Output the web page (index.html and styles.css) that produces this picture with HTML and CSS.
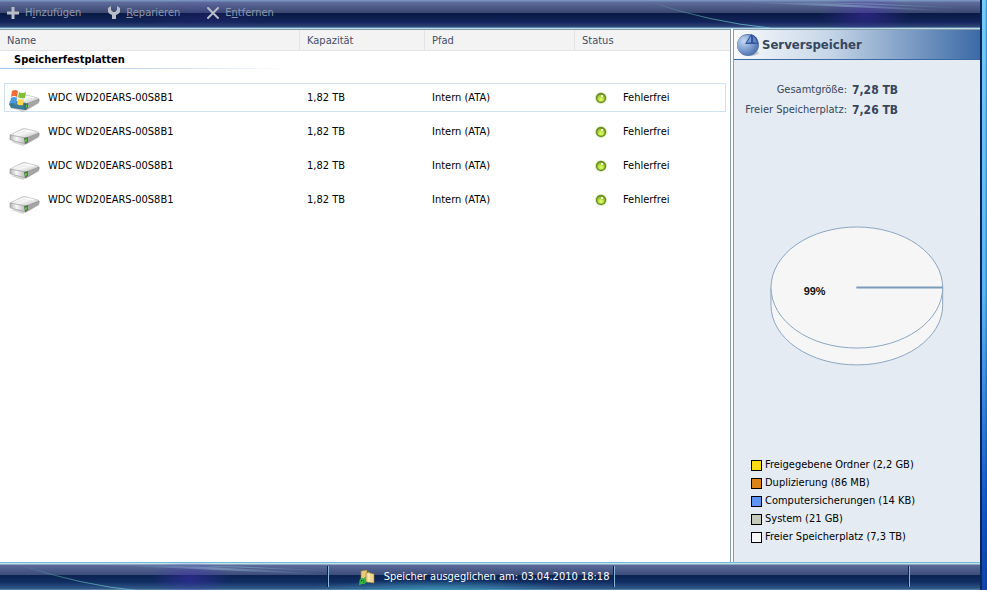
FILE: index.html
```html
<!DOCTYPE html>
<html lang="de">
<head>
<meta charset="utf-8">
<title>Serverspeicher</title>
<link rel="stylesheet" href="styles.css">
</head>
<body>
<svg class="defs" aria-hidden="true">
  <defs>
    <linearGradient id="metal" x1="0" y1="0" x2="1" y2="1"><stop offset="0" stop-color="#bbb"/><stop offset=".45" stop-color="#f6f6f6"/><stop offset="1" stop-color="#b0b0b0"/></linearGradient>
    <linearGradient id="front" x1="0" y1="0" x2="1" y2="0"><stop offset="0" stop-color="#b2b2b2"/><stop offset=".4" stop-color="#f8f8f8"/><stop offset="1" stop-color="#b5b5b5"/></linearGradient>
    <radialGradient id="led" cx=".5" cy=".7" r=".75"><stop offset="0" stop-color="#eaff70"/><stop offset=".55" stop-color="#b2d93a"/><stop offset="1" stop-color="#7ba32a"/></radialGradient>
    <radialGradient id="disc" cx=".35" cy=".3" r=".8"><stop offset="0" stop-color="#c5d8f2"/><stop offset=".6" stop-color="#7a9bd0"/><stop offset="1" stop-color="#4c6ca8"/></radialGradient>
    <linearGradient id="ray" x1="0" x2="1"><stop offset="0" stop-color="#9be" stop-opacity="0"/><stop offset=".5" stop-color="#acd9ea" stop-opacity=".4"/><stop offset="1" stop-color="#9be" stop-opacity="0"/></linearGradient>
    <linearGradient id="arc" x1="0" x2="1"><stop offset="0" stop-color="#6bd0b8" stop-opacity="0"/><stop offset=".5" stop-color="#57a8a4" stop-opacity=".75"/><stop offset="1" stop-color="#6bd" stop-opacity=".9"/></linearGradient>
    <symbol id="drive" viewBox="0 0 32 18">
      <path d="M2 14 14 18 31 9 25 8Z" fill="#777" opacity=".3"/>
      <path d="M1 7 13 1Q15 0 18 1L29 4Q31 5 30 7L17 11 3 9Z" fill="url(#metal)" stroke="#b5b5b5" stroke-width=".6"/>
      <path d="M1 7 17 10V16L2 12Q1 12 1 11Z" fill="url(#front)" stroke="#909090" stroke-width=".6"/>
      <path d="M17 10 30 5V8L17 16Z" fill="#a5a5a5" stroke="#888" stroke-width=".5"/>
      <path d="M15 10 19 9V14L16 16Z" fill="#527b48"/><path d="M16 12 18 11V13L16 14Z" fill="#62d137"/>
      <path d="M5 6 15 2 25 4" fill="none" stroke="#fff" stroke-width="1"/>
    </symbol>
    <symbol id="light" viewBox="0 0 12 12">
      <circle cx="6" cy="6" r="5.8" fill="#c7dc99"/><circle cx="6" cy="6" r="5" fill="#5b851a"/><circle cx="6" cy="6" r="3.8" fill="url(#led)"/><path d="M6 3h2v2H6z" fill="#fbffe8"/>
    </symbol>
    <symbol id="swoosh" viewBox="0 0 450 28" preserveAspectRatio="none">
      <path d="M20 2Q80 22 140 28" fill="none" stroke="url(#arc)"/>
      <path d="M100 2Q220 2 330 12 220 7 100 2" fill="url(#ray)"/>
      <path d="M150 2Q240 3 330 8" fill="none" stroke="url(#ray)"/>
    </symbol>
  </defs>
</svg>
<div class="window">
  <div class="content">
    <header class="bar toolbar">
      <svg class="glint glint-right" viewBox="0 0 350 28" aria-hidden="true"><use href="#swoosh" width="450" height="28"/></svg>
      <button class="tool" disabled><svg width="14" height="14" viewBox="0 0 14 14" aria-hidden="true"><path d="M7 1V13M1 7H13" stroke="#b8bdc9" stroke-width="3"/></svg><span>H<u>i</u>nzufügen</span></button>
      <button class="tool" disabled><svg width="14" height="14" viewBox="0 0 14 14" aria-hidden="true"><path d="M1 2 4 0V4L6 6H8L10 4V0L13 2V6Q12 8 9 9V13H5V9Q2 8 1 6Z" fill="#b8bdc9"/></svg><span><u>R</u>eparieren</span></button>
      <button class="tool" disabled><svg width="14" height="14" viewBox="0 0 14 14" aria-hidden="true"><path d="M2 2 12 12M12 2 2 12" stroke="#b8bdc9" stroke-width="2" stroke-linecap="round"/></svg><span>E<u>n</u>tfernen</span></button>
    </header>
    <div class="panes">
      <main class="disks">
        <table>
          <thead><tr><th scope="col">Name</th><th scope="col">Kapazität</th><th scope="col">Pfad</th><th scope="col">Status</th></tr></thead>
          <tbody>
            <tr class="group"><th colspan="4" scope="rowgroup">Speicherfestplatten</th></tr>
            <tr class="disk focused"><td><svg class="drive" viewBox="0 0 32 22" aria-hidden="true"><use href="#drive" y="4" width="32" height="18"/><path d="M0 14 3 10 17 13 17 20 2 18Z" fill="#246d8b" opacity=".85"/><path d="M3 1Q6-1 9 1L8 7Q5 5 2 7Z" fill="#ed6b35"/><path d="M10 2Q13 4 17 2L16 8Q12 9 9 7Z" fill="#83be38"/><path d="M2 8Q5 6 8 8L7 14Q4 12 1 14Z" fill="#459be3"/><path d="M9 9Q12 10 15 9L14 15Q10 16 8 14Z" fill="#ffd84a"/></svg>WDC WD20EARS-00S8B1</td><td>1,82 TB</td><td>Intern (ATA)</td><td><svg class="light" aria-hidden="true"><use href="#light"/></svg>Fehlerfrei</td></tr>
            <tr class="disk"><td><svg class="drive" viewBox="0 0 32 22" aria-hidden="true"><use href="#drive" y="4" width="32" height="18"/></svg>WDC WD20EARS-00S8B1</td><td>1,82 TB</td><td>Intern (ATA)</td><td><svg class="light" aria-hidden="true"><use href="#light"/></svg>Fehlerfrei</td></tr>
            <tr class="disk"><td><svg class="drive" viewBox="0 0 32 22" aria-hidden="true"><use href="#drive" y="4" width="32" height="18"/></svg>WDC WD20EARS-00S8B1</td><td>1,82 TB</td><td>Intern (ATA)</td><td><svg class="light" aria-hidden="true"><use href="#light"/></svg>Fehlerfrei</td></tr>
            <tr class="disk"><td><svg class="drive" viewBox="0 0 32 22" aria-hidden="true"><use href="#drive" y="4" width="32" height="18"/></svg>WDC WD20EARS-00S8B1</td><td>1,82 TB</td><td>Intern (ATA)</td><td><svg class="light" aria-hidden="true"><use href="#light"/></svg>Fehlerfrei</td></tr>
          </tbody>
        </table>
      </main>
      <aside class="storage">
        <h2><svg width="24" height="24" viewBox="0 0 24 24" aria-hidden="true"><ellipse cx="14" cy="20" rx="9" ry="3" fill="#777" opacity=".3"/><circle cx="12" cy="12" r="11" fill="#5877b0"/><circle cx="11" cy="12" r="10" fill="url(#disc)"/><path d="M9 11 15 1Q22 3 22 11Z" fill="#34569a"/><path d="M11 10 15 3 15 9Z" fill="#7fa2dd"/><path d="M17 3Q20 5 21 10L17 9Z" fill="#5f83c4"/></svg>Serverspeicher</h2>
        <dl class="totals"><dt>Gesamtgröße:</dt><dd>7,28 TB</dd><dt>Freier Speicherplatz:</dt><dd>7,26 TB</dd></dl>
        <svg class="pie" viewBox="0 0 176 142" role="img" aria-label="99%">
          <path d="M1 62V80A86.5 60 0 0 0 174 80V62Z" fill="#f6f6f6" stroke="#8ba5bf"/>
          <ellipse cx="87.5" cy="62" rx="86.5" ry="61" fill="#f6f6f6" stroke="#8ba5bf"/>
          <path d="M87 62H174" stroke="#7d9bb9" stroke-width="2"/>
          <text class="share" x="45" y="70" text-anchor="middle">99%</text>
        </svg>
        <ul class="legend">
          <li><i class="shared"></i>Freigegebene Ordner (2,2 GB)</li>
          <li><i class="copies"></i>Duplizierung (86 MB)</li>
          <li><i class="backups"></i>Computersicherungen (14 KB)</li>
          <li><i class="system"></i>System (21 GB)</li>
          <li><i class="free"></i>Freier Speicherplatz (7,3 TB)</li>
        </ul>
      </aside>
    </div>
    <footer class="bar status">
      <svg class="glint glint-left" aria-hidden="true"><use href="#swoosh"/></svg>
      <div class="cell"></div>
      <div class="cell message"><svg width="16" height="16" viewBox="0 0 16 16" aria-hidden="true"><path d="M2 2 8 1V11L2 10Z" fill="#e9ca7d" stroke="#9c7831" stroke-width=".6"/><path d="M7 4 10 3 11 4 15 5V14L7 13Z" fill="#efd58e" stroke="#9c7831" stroke-width=".6"/><path d="M10 5V13" stroke="#fff3c4"/><path d="M1 12Q2 9 5 10L6 9V12H3M7 12Q6 15 3 14L1 15V13H4" fill="none" stroke="#32b944" stroke-width="1.5"/></svg>Speicher ausgeglichen am: 03.04.2010 18:18</div>
      <div class="cell"></div>
      <div class="cell"></div>
    </footer>
  </div>
  <div class="frame"></div>
</div>
</body>
</html>
```
FILE: styles.css
```css
* { box-sizing: border-box; }
body { margin: 0; font: 11px/14px "DejaVu Sans Condensed", Tahoma, "DejaVu Sans", sans-serif; color: #000; }
.defs { position: absolute; width: 0; height: 0; }
.window { display: flex; min-height: 100vh; }
.content { flex: 1; display: flex; flex-direction: column; min-width: 0; background: #fff; }
.frame { width: 7px; background: linear-gradient(90deg, #07275a 0 2px, transparent 2px 5px, rgba(10, 60, 150, .5)), linear-gradient(#75cdfa, #5ab4f2 50%, #1457c8 85%, #0f43a8); }
.bar { position: relative; display: flex; flex-shrink: 0; height: 28px; }
.toolbar { align-items: center; gap: 26px; height: 29px; padding: 0 6px 2px; border-bottom: 1px solid #b5dce8;
  background: radial-gradient(ellipse 45px 20px at 865px 14px, rgba(75, 48, 180, .45), transparent), radial-gradient(ellipse 60px 20px at 205px 16px, rgba(75, 48, 180, .15), transparent), linear-gradient(#7795bd 0 1px, #606c9c 2px, #39476f 13px, #091944 13px, #13245a 22px, #314679 27px, #8fc3d8); }
.glint { position: absolute; top: 0; height: 28px; width: 450px; }
.glint-right { right: 0; width: 350px; overflow: hidden; }
.glint-left { left: 0; }
.tool { display: flex; align-items: center; gap: 5px; margin: 0; padding: 0; border: 0; background: none; font: inherit; color: #8e97ae; z-index: 1; }
.panes { flex: 1; display: grid; grid-template-columns: minmax(0, 731fr) minmax(0, 247fr); gap: 2px; }
.disks { border-top: 1px solid #8a9ba8; border-right: 1px solid #8a9dad; }
table, thead, tbody { display: block; }
tr { display: grid; grid-template-columns: 300px 125px 150px 1fr; }
th, td { padding: 0; text-align: left; font-weight: normal; }
thead { background: #f3f3f3; border-bottom: 1px solid #e3e3e3; }
thead th { height: 20px; padding: 4px 7px; color: #3f4e68; border-right: 1px solid #e3e3e3; }
thead th:last-child { border: 0; }
.group { display: block; margin-bottom: 14px; }
.group th { display: block; height: 18px; padding: 2px 14px; font-weight: bold; border-bottom: 1px solid; border-image: linear-gradient(90deg, #a6c4e4, #c4d8ed 150px, transparent 290px) 1; }
.disk { height: 29px; margin: 0 4px 5px; border: 1px solid transparent; grid-template-columns: 295px 125px 150px 1fr; }
.disk td { display: flex; align-items: center; padding-left: 7px; }
.disk td:first-child { padding-left: 4px; gap: 7px; }
.disk td:last-child { padding-left: 20px; gap: 16px; }
.focused { border-color: #d0e2ef; }
.drive { width: 32px; height: 22px; margin-top: 6px; }
.light { width: 12px; height: 12px; }
.storage { display: flex; flex-direction: column; background: #e4ebf3; border: 1px solid #8a9dad; border-width: 1px 0 0 1px; }
h2 { display: flex; align-items: center; gap: 2px; height: 30px; margin: 0; padding-left: 2px; font: bold 13px/16px "DejaVu Sans Condensed", Tahoma, sans-serif; color: #36465c; background: linear-gradient(90deg, #f8fafc, #c7d7e8 38%, #3c6aa6); border-bottom: 1px solid #3968a5; }
.totals { display: grid; grid-template-columns: 113px 1fr; gap: 4px 5px; margin: 22px 0 18px; line-height: 16px; color: #36465c; }
dt { text-align: right; white-space: nowrap; }
dd { margin: 0; font-size: 12px; font-weight: bold; }
.pie { display: block; width: 71%; margin: auto; }
.share { font: bold 11px "Liberation Sans", Arial, sans-serif; fill: #111; }
.legend { list-style: none; margin: 0; padding: 0 0 16px 17px; }
.legend li { display: flex; align-items: center; gap: 3px; height: 18px; }
.legend i { width: 11px; height: 11px; border: 1px solid #000; }
.shared { background: #fbdc12; }
.copies { background: #dc8317; }
.backups { background: #5d94f5; }
.system { background: #c8c9bd; }
.free { background: #f8f8f8; }
.status { display: grid; grid-template-columns: 328fr 287fr 295fr 71fr; padding: 3px 0; color: #fff; border-top: 1px solid #70bad2;
  background: radial-gradient(ellipse 40px 18px at 190px 15px, rgba(70, 48, 180, .5), transparent), radial-gradient(ellipse 130px 12px at 440px 28px, rgba(60, 155, 190, .8), transparent), linear-gradient(#c0e2ea 0 1px, #5a6a99 2px, #3c4d7b 12px, #0b2250 12px, #102d62 19px, #335b8b 26px, #71a9b8 27px); }
.cell { border-right: 1px solid #07204e; box-shadow: 1px 0 #8db7d8; }
.cell:last-child { border: 0; box-shadow: none; }
.message { display: flex; align-items: center; padding-left: 31px; gap: 9px; white-space: nowrap; z-index: 1; }
```
